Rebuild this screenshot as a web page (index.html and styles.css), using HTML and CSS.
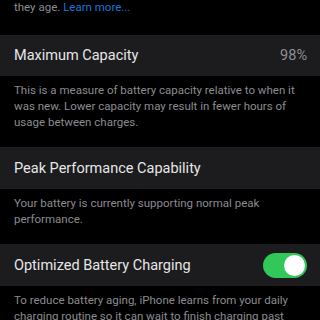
FILE: index.html
```html
<!DOCTYPE html>
<html>
<head>
<meta charset="utf-8">
<link rel="stylesheet" href="styles.css">
</head>
<body>
<div class="page">
  <p class="footer first">they age. <span class="link">Learn more...</span></p>
  <div class="cell cell-1">
    <span class="title">Maximum Capacity</span>
    <span class="value">98%</span>
  </div>
  <p class="footer">This is a measure of battery capacity relative to when it was new. Lower capacity may result in fewer hours of usage between charges.</p>
  <div class="cell cell-2">
    <span class="title">Peak Performance Capability</span>
  </div>
  <p class="footer">Your battery is currently supporting normal peak performance.</p>
  <div class="cell cell-3">
    <span class="title">Optimized Battery Charging</span>
    <span class="toggle"><span class="knob"></span></span>
  </div>
  <p class="footer">To reduce battery aging, iPhone learns from your daily charging routine so it can wait to finish charging past 80% until you need to use it.</p>
</div>
</body>
</html>
```

FILE: styles.css
```css
html, body {
  margin: 0;
  padding: 0;
  background: #000;
  overflow: hidden;
}
.page {
  width: 320px;
  height: 320px;
  overflow: hidden;
  font-family: Roboto, "Liberation Sans", sans-serif;
}
.footer {
  margin: 0;
  padding: 6px 20px 17px 14px;
  font-size: 11.5px;
  line-height: 16px;
  color: #8b8b90;
}
.footer.first {
  margin-top: -1px;
  padding-top: 0;
  padding-bottom: 20px;
}
.link {
  color: #1a74dc;
}
.cell {
  background: #1c1c1e;
  height: 41px;
  padding: 0 13px 0 14px;
  display: flex;
  align-items: center;
  justify-content: space-between;
}
.cell-2, .cell-3 {
  height: 42px;
}
.title {
  color: #e6e6e6;
  font-size: 14.5px;
}
.value {
  color: #8e8e93;
  font-size: 14.5px;
}
.toggle {
  width: 44px;
  height: 25px;
  border-radius: 13px;
  background: #32c759;
  display: flex;
  align-items: center;
  justify-content: flex-end;
  padding: 0 2px;
  box-sizing: border-box;
}
.knob {
  width: 21px;
  height: 21px;
  border-radius: 50%;
  background: #fff;
}
```
